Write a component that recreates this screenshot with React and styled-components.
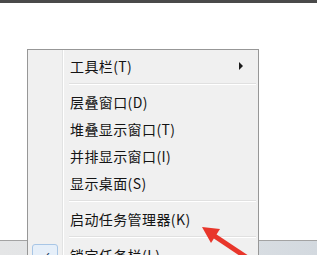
import React from 'react';
import styled, { createGlobalStyle } from 'styled-components';

const Global = createGlobalStyle`
  html, body {
    margin: 0;
    padding: 0;
    background: #ffffff;
    overflow: hidden;
  }
`;

const Screen = styled.div`
  position: relative;
  width: 317px;
  height: 255px;
  overflow: hidden;
  display: flex;
  flex-direction: column;
  font-family: 'Noto Sans CJK SC', 'Noto Sans', sans-serif;
`;

const TopBar = styled.div`
  height: 3px;
  background: #4a4a4a;
`;

const Desktop = styled.div`
  flex: 1;
  background: #ffffff;
`;

const Taskbar = styled.div`
  height: 14px;
  border-top: 1px solid #a3a3a3;
  background: linear-gradient(to right, #e4e5e6 0%, #dde1e5 60%, #d3d9df 100%);
`;

// popup menu over the desktop, runs past the bottom of the frame
const Menu = styled.div`
  position: absolute;
  left: 27px;
  top: 49px;
  width: 230px;
  height: 206px;
  overflow: hidden;
  border: 1px solid #979797;
  border-bottom: none;
  background: #f0f0f0;
  display: grid;
  grid-template-columns: 35px 1fr;
`;

const Gutter = styled.div`
  border-right: 1px solid #e2e3e3;
  box-shadow: 1px 0 0 #ffffff;
  position: relative;
`;

const CheckBox = styled.div`
  position: absolute;
  left: 4px;
  top: 194px;
  width: 24px;
  height: 22px;
  border: 1px solid #a8c6e6;
  border-radius: 3px;
  background: #e6eff9;
  display: flex;
  align-items: center;
  justify-content: center;
  font-size: 12px;
  color: #243e63;
`;

const Items = styled.div`
  padding: 2px 2px 0 6px;
  display: flex;
  flex-direction: column;
`;

const Item = styled.div`
  flex: none;
  height: 27px;
  display: flex;
  align-items: center;
  justify-content: space-between;
  padding: 0 13px 0 1px;
  font-size: 14px;
  letter-spacing: 0.4px;
  color: #141414;
  white-space: nowrap;
`;

const Separator = styled.div`
  flex: none;
  height: 9px;
  display: flex;
  align-items: center;

  &::before {
    content: '';
    flex: 1;
    height: 1px;
    background: #e0e0e0;
    box-shadow: 0 1px 0 #ffffff;
  }
`;

const SubArrow = styled.span`
  width: 0;
  height: 0;
  border-top: 4px solid transparent;
  border-bottom: 4px solid transparent;
  border-left: 4px solid #1b1b1b;
`;

const Pointer = styled.svg`
  position: absolute;
  left: 0;
  top: 0;
  pointer-events: none;
`;

const entries = [
  { label: '工具栏(T)', sub: true },
  'sep',
  { label: '层叠窗口(D)' },
  { label: '堆叠显示窗口(T)' },
  { label: '并排显示窗口(I)' },
  { label: '显示桌面(S)' },
  'sep',
  { label: '启动任务管理器(K)' },
  'sep',
  { label: '锁定任务栏(L)' },
];

export default function App() {
  return (
    <>
      <Global />
      <Screen>
        <TopBar />
        <Desktop />
        <Taskbar />
        <Menu>
          <Gutter>
            <CheckBox>✓</CheckBox>
          </Gutter>
          <Items>
            {entries.map((e, i) =>
              e === 'sep' ? (
                <Separator key={i} />
              ) : (
                <Item key={i}>
                  <span>{e.label}</span>
                  {e.sub && <SubArrow />}
                </Item>
              )
            )}
          </Items>
        </Menu>
        <Pointer width="317" height="255" viewBox="0 0 317 255">
          <line x1="213" y1="235" x2="252" y2="261" stroke="#e8362b" strokeWidth="5" />
          <polygon points="202,227 220,229 211,243" fill="#e8362b" />
        </Pointer>
      </Screen>
    </>
  );
}
